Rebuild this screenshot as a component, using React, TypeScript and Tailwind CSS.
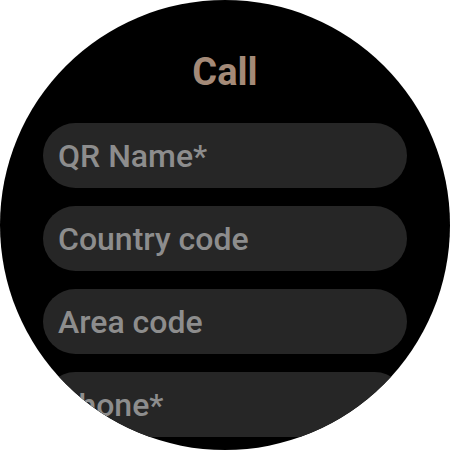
export default function App() {
  const fields = ["QR Name*", "Country code", "Area code", "Phone*"];
  return (
    <div className="w-[450px] h-[450px] bg-white">
      <div
        className="w-[450px] h-[450px] rounded-full bg-black overflow-hidden flex flex-col items-center pt-[50px]"
        style={{ fontFamily: "Roboto, 'Noto Sans', sans-serif" }}
      >
        <h1 className="text-[38px] leading-[44px] font-bold text-[#a48a78]">Call</h1>
        <div className="mt-[29px] flex flex-col gap-[18px]">
          {fields.map((f) => (
            <div
              key={f}
              className="w-[364px] h-[65px] shrink-0 rounded-full bg-[#262626] flex items-center px-[15px] text-[32px] font-medium text-[#8d8d8d]"
            >
              {f}
            </div>
          ))}
        </div>
      </div>
    </div>
  );
}
